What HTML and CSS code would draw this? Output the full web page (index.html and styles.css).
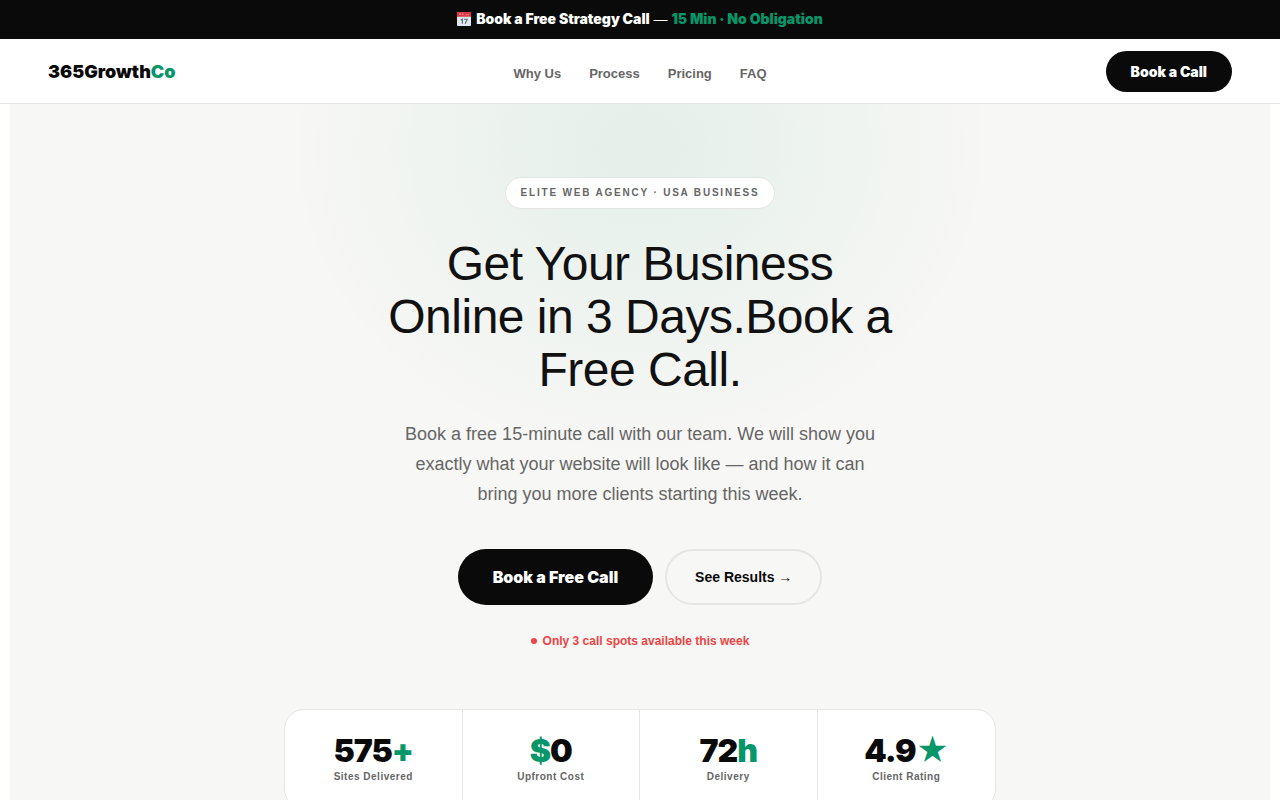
FILE: index.html
```
<!DOCTYPE html>
<html lang="en">
<head>
  <meta charset="UTF-8">
  <meta name="viewport" content="width=device-width, initial-scale=1.0">
  <title>365GrowthCo</title>
  <link rel="stylesheet" href="styles.css">
</head>
<body>
  <div class="topbar">
    <svg class="cal" viewBox="0 0 26 26" aria-hidden="true">
      <rect x="0" y="1" width="26" height="25" rx="2" fill="#dfe6ee"/>
      <path d="M2 0h22a2 2 0 0 1 2 2v7H0V2a2 2 0 0 1 2-2z" fill="#dc3545"/>
      <path d="M4 4h3M9 4h3M16 5h2M20 5h2" stroke="#f3a6ae" stroke-width="2"/>
      <path d="M7 15l3-2v9M13 13.500h6l-4 8.500" fill="none" stroke="#56697c" stroke-width="2"/>
    </svg>
    <a href="#book"><strong>Book a Free Strategy Call</strong> — <strong class="green">15 Min · No Obligation</strong></a>
  </div>

  <nav class="nav">
    <a href="#" class="logo">365Growth<span class="green">Co</span></a>
    <div class="nav-links">
      <a href="#why">Why Us</a>
      <a href="#process">Process</a>
      <a href="#pricing">Pricing</a>
      <a href="#faq">FAQ</a>
    </div>
    <button class="nav-btn">Book a Call</button>
  </nav>

  <section class="hero">
    <div class="pill">Elite Web Agency · USA Business</div>
    <h1>Get Your Business Online in 3 Days.Book a Free Call.</h1>
    <p class="sub">Book a free 15-minute call with our team. We will show you exactly what your website will look like — and how it can bring you more clients starting this week.</p>

    <div class="hero-btns">
      <button class="btn-main">Book a Free Call</button>
      <button class="btn-line">See Results →</button>
    </div>

    <div class="spots"><span class="dot"></span>Only 3 call spots available this week</div>

    <div class="stats">
      <div class="stat">
        <div class="num">575<span class="green">+</span></div>
        <div class="label">Sites Delivered</div>
      </div>
      <div class="stat">
        <div class="num"><span class="green">$</span>0</div>
        <div class="label">Upfront Cost</div>
      </div>
      <div class="stat">
        <div class="num">72<span class="green">h</span></div>
        <div class="label">Delivery</div>
      </div>
      <div class="stat">
        <div class="num">4.9<span class="green">★</span></div>
        <div class="label">Client Rating</div>
      </div>
    </div>
  </section>
</body>
</html>
```

FILE: styles.css
```
* {
  box-sizing: border-box;
  margin: 0;
  padding: 0;
}
body {
  font-family: "Liberation Sans", Arial, sans-serif;
  background: #fff;
  color: #0a0a0a;
  overflow-x: hidden;
}
a {
  color: inherit;
  text-decoration: none;
}
button {
  font-family: inherit;
  cursor: pointer;
}
.green {
  color: #059669;
}

/* extra heavy text */
.topbar strong,
.logo,
.nav-btn,
.btn-main,
.num {
  font-family: Inter, sans-serif;
  font-weight: 900;
}

/* top bar */
.topbar {
  display: flex;
  justify-content: center;
  align-items: center;
  gap: 5px;
  background: #0a0a0a;
  color: #fff;
  padding: 10px 20px 11px;
  font-size: 14px;
  line-height: 18px;
}
.cal {
  width: 14px;
  height: 14px;
}

/* nav */
.nav {
  display: grid;
  grid-template-columns: 1fr auto 1fr;
  align-items: center;
  padding: 12px 48px 11px;
  background: #fff;
  border-bottom: 1px solid #e5e5e3;
}
.logo {
  font-size: 18px;
}
.nav-links {
  display: flex;
  gap: 28px;
  padding-top: 3px;
  font-size: 13px;
  font-weight: 700;
  color: #666;
}
.nav-btn {
  justify-self: end;
  background: #0a0a0a;
  color: #fff;
  border: none;
  border-radius: 100px;
  padding: 12px 25px;
  font-size: 14px;
  line-height: 17px;
}

/* hero */
.hero {
  display: flex;
  flex-direction: column;
  align-items: center;
  margin: 0 10px;
  padding: 73px 24px 80px;
  text-align: center;
  background: radial-gradient(350px 310px at 50% 44px, rgba(5, 150, 105, 0.08), transparent) #f7f7f5;
}
.pill {
  background: #fff;
  border: 1px solid #e5e5e3;
  border-radius: 100px;
  padding: 8px 15px;
  font-size: 10px;
  font-weight: 700;
  line-height: 14px;
  letter-spacing: 0.18em;
  text-transform: uppercase;
  color: #666;
}
h1 {
  max-width: 520px;
  margin-top: 28px;
  font-size: 48px;
  font-weight: 400;
  line-height: 53px;
  letter-spacing: -0.5px;
  color: #111;
}
.sub {
  max-width: 480px;
  margin-top: 23px;
  font-size: 18px;
  line-height: 30px;
  color: #666;
}
.hero-btns {
  display: flex;
  gap: 12px;
  margin-top: 40px;
}
.btn-main,
.btn-line {
  border-radius: 100px;
  line-height: 20px;
}
.btn-main {
  background: #0a0a0a;
  color: #fff;
  border: none;
  padding: 18px 35px;
  font-size: 16px;
}
.btn-line {
  background: transparent;
  color: #0a0a0a;
  border: 2px solid #e5e5e3;
  padding: 16px 28px;
  font-size: 14px;
  font-weight: 700;
}
.spots {
  display: flex;
  align-items: center;
  gap: 6px;
  margin-top: 28px;
  font-size: 12px;
  font-weight: 700;
  line-height: 16px;
  color: #ef4444;
}
.dot {
  width: 6px;
  height: 6px;
  border-radius: 50%;
  background: #ef4444;
}

/* stats */
.stats {
  display: grid;
  grid-template-columns: repeat(4, 1fr);
  width: 100%;
  max-width: 712px;
  margin-top: 60px;
  background: #fff;
  border: 1px solid #e5e5e3;
  border-radius: 20px;
}
.stat {
  padding: 24px 16px;
  border-right: 1px solid #e5e5e3;
}
.stat:last-child {
  border-right: none;
}
.num {
  font-size: 32px;
  line-height: 34px;
  letter-spacing: -1px;
}
.label {
  margin-top: 2px;
  font-size: 10px;
  font-weight: 700;
  line-height: 14px;
  letter-spacing: 0.5px;
  color: #666;
}
```
